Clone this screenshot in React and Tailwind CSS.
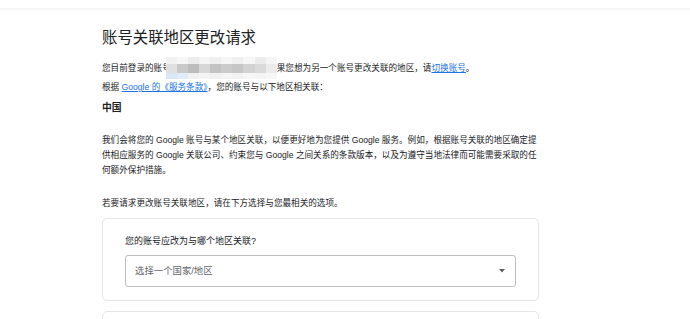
import React from "react";

const font = {
  fontFamily: '"Liberation Sans", Arial, "Noto Sans CJK SC", sans-serif',
};

const mosaic = [
  ["#f1f1f1", "#f6f6f6", "#ececec", "#f4f4f4", "#efefef", "#f5f5f5", "#f0f0f0", "#f7f7f7", "#ececec", "#f5f5f5"],
  ["#e0e0e0", "#c9c9c9", "#bdbdbd", "#d7d7d7", "#c3c3c3", "#cbcbcb", "#c6c6c6", "#d2d2d2", "#dadada", "#ebebeb"],
  ["#d8e6f8", "#e1ecf9", "#f2f2f2", "#f4f4f4", "#f1f1f1", "#f5f5f5", "#f2f2f2", "#f6f6f6", "#f4f4f4", "#f7f7f7"],
];

function Mosaic() {
  return (
    <div className="shrink-0 w-[111px] h-[22px] flex flex-col -ml-[5px]">
      {mosaic.map((row, i) => (
        <div key={i} className={"flex " + (i === 1 ? "h-[9px]" : "h-[6.5px]")}>
          {row.map((c, j) => (
            <div key={j} className="flex-1" style={{ background: c }} />
          ))}
        </div>
      ))}
    </div>
  );
}

export default function App() {
  return (
    <div className="w-[690px] h-[319px] bg-white overflow-hidden text-[#202124]" style={font}>
      <div className="h-[8px] bg-white" />
      <div className="h-[2px] bg-[#f4f4f4]" />
      <div className="ml-[102px] w-[437px]">
        <h1 className="mt-[18px] text-[15.4px] leading-[20px] font-normal text-[#202124]">
          账号关联地区更改请求
        </h1>
        <div className="mt-[13px] h-[14px] flex items-center text-[8.6px] whitespace-nowrap">
          <span>您目前登录的账号</span>
          <Mosaic />
          <span>
            果您想为另一个账号更改关联的地区，请
            <a className="text-[#1a73e8] underline">切换账号</a>。
          </span>
        </div>
        <p className="mt-[5px] text-[8.6px] leading-[14px]">
          根据{" "}
          <a className="text-[#1a73e8] underline">Google 的《服务条款》</a>
          ，您的账号与以下地区相关联：
        </p>
        <p className="mt-[7px] text-[9.8px] leading-[14px] font-bold">中国</p>
        <p className="mt-[18px] text-[8.6px] leading-[14.8px]">
          我们会将您的 Google 账号与某个地区关联，以便更好地为您提供 Google 服务。例如，根据账号关联的地区确定提供相应服务的 Google 关联公司、约束您与 Google 之间关系的条款版本，以及为遵守当地法律而可能需要采取的任何额外保护措施。
        </p>
        <p className="mt-[19px] text-[8.6px] leading-[14px]">
          若要请求更改账号关联地区，请在下方选择与您最相关的选项。
        </p>
        <div className="mt-[8px] border border-[#e6e6e6] rounded-[5px] px-[22px] pt-[15px] pb-[13px]">
          <p className="text-[9px] leading-[14px]">您的账号应改为与哪个地区关联?</p>
          <div className="mt-[7px] h-[32px] border border-[#bdbdbd] rounded-[3px] flex items-center justify-between pl-[9px] pr-[10px]">
            <span className="text-[9.4px] text-[#5f6368]">选择一个国家/地区</span>
            <svg width="6" height="4" viewBox="0 0 6 4">
              <path d="M0 0 L6 0 L3 3.5 Z" fill="#5f6368" />
            </svg>
          </div>
        </div>
        <div className="mt-[10px] h-[40px] border border-[#e6e6e6] rounded-[5px]" />
      </div>
    </div>
  );
}
